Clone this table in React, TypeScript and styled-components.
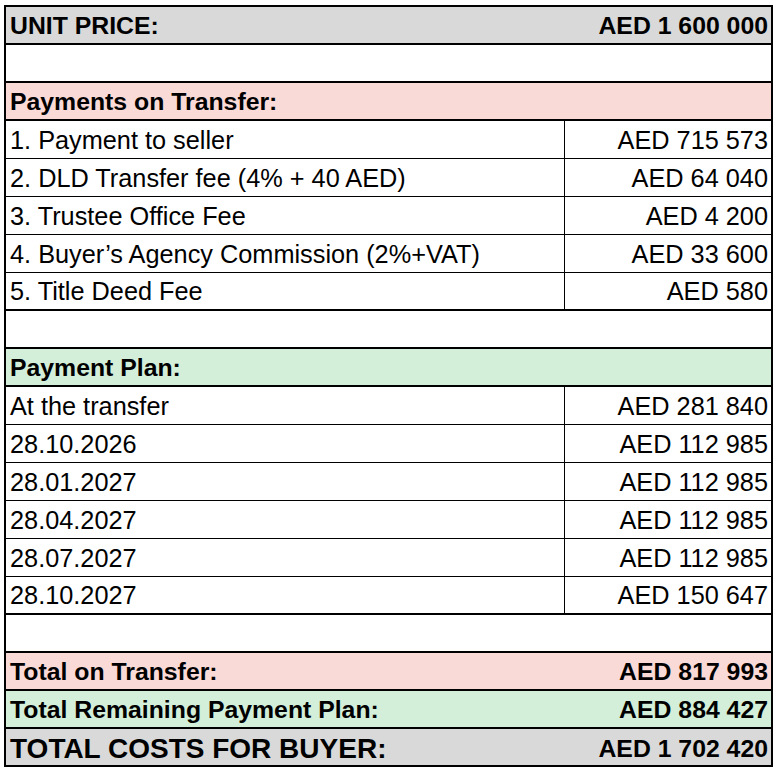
import React from "react";
import styled, { createGlobalStyle } from "styled-components";

const Global = createGlobalStyle`
  body {
    margin: 0;
    background: #fff;
  }
`;

const Page = styled.div`
  padding: 5px 0 0 4px;
`;

const Sheet = styled.div`
  width: 769px;
  box-sizing: border-box;
  border: 2px solid #000;
  font-family: "Liberation Sans", Arial, sans-serif;
  color: #000;
`;

const Band = styled.div<{ $bg?: string; $last?: boolean }>`
  height: ${(p) => (p.$last ? "36px" : "38px")};
  box-sizing: border-box;
  border-bottom: ${(p) => (p.$last ? "none" : "2px solid #000")};
  background: ${(p) => p.$bg || "#fff"};
  display: flex;
  justify-content: space-between;
  align-items: flex-end;
  padding: 0 3px 4px 4px;
  font-weight: bold;
  font-size: 24.8px;
  line-height: 1;
`;

const BigLabel = styled.span`
  font-size: 28px;
  margin-bottom: -2px;
`;

const GrandValue = styled.span`
  margin-bottom: -1px;
`;

const Line = styled.div<{ $end?: boolean }>`
  height: 38px;
  box-sizing: border-box;
  border-bottom: ${(p) => (p.$end ? "2px" : "1px")} solid #000;
  display: grid;
  grid-template-columns: 558px 1fr;
  font-size: 25.3px;
  line-height: 1;
`;

const Label = styled.div`
  display: flex;
  align-items: flex-end;
  padding: 0 0 5px 4px;
`;

const Amount = styled.div`
  border-left: 1px solid #000;
  display: flex;
  align-items: flex-end;
  justify-content: flex-end;
  padding: 0 3px 5px 0;
`;

const PINK = "#fadad7";
const GREEN = "#d3efda";
const GRAY = "#d9d9d9";

const transfer = [
  ["1. Payment to seller", "AED 715 573"],
  ["2. DLD Transfer fee (4% + 40 AED)", "AED 64 040"],
  ["3. Trustee Office Fee", "AED 4 200"],
  ["4. Buyer\u2019s Agency Commission (2%+VAT)", "AED 33 600"],
  ["5. Title Deed Fee", "AED 580"],
];

const plan = [
  ["At the transfer", "AED 281 840"],
  ["28.10.2026", "AED 112 985"],
  ["28.01.2027", "AED 112 985"],
  ["28.04.2027", "AED 112 985"],
  ["28.07.2027", "AED 112 985"],
  ["28.10.2027", "AED 150 647"],
];

function Lines({ rows }: { rows: string[][] }) {
  return (
    <>
      {rows.map(([label, value], i) => (
        <Line key={label} $end={i === rows.length - 1}>
          <Label>{label}</Label>
          <Amount>{value}</Amount>
        </Line>
      ))}
    </>
  );
}

export default function App() {
  return (
    <Page>
      <Global />
      <Sheet>
        <Band $bg={GRAY}>
          <span>UNIT PRICE:</span>
          <span>AED 1 600 000</span>
        </Band>
        <Band />
        <Band $bg={PINK}>
          <span>Payments on Transfer:</span>
        </Band>
        <Lines rows={transfer} />
        <Band />
        <Band $bg={GREEN}>
          <span>Payment Plan:</span>
        </Band>
        <Lines rows={plan} />
        <Band />
        <Band $bg={PINK}>
          <span>Total on Transfer:</span>
          <span>AED 817 993</span>
        </Band>
        <Band $bg={GREEN}>
          <span>Total Remaining Payment Plan:</span>
          <span>AED 884 427</span>
        </Band>
        <Band $bg={GRAY} $last>
          <BigLabel>TOTAL COSTS FOR BUYER:</BigLabel>
          <GrandValue>AED 1 702 420</GrandValue>
        </Band>
      </Sheet>
    </Page>
  );
}
